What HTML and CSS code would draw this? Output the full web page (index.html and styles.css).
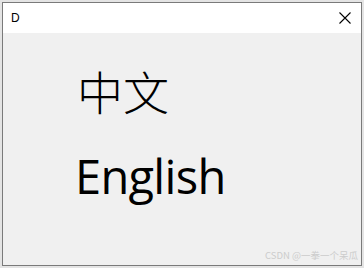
FILE: index.html
```html
<!DOCTYPE html>
<html>
<head>
<meta charset="utf-8">
<link rel="stylesheet" href="styles.css">
</head>
<body>
<div class="window">
  <div class="titlebar">
    <span class="title">D</span>
    <svg class="close" width="12" height="12" viewBox="0 0 12 12"><path d="M0.5 0.5 L11.5 11.5 M11.5 0.5 L0.5 11.5" stroke="#000" stroke-width="1.1" fill="none"/></svg>
  </div>
  <div class="content">
    <div class="zh">中文</div>
    <div class="en">English</div>
    <div class="mark">CSDN @一拳一个呆瓜</div>
  </div>
</div>
</body>
</html>
```
FILE: styles.css
```css
html, body { margin: 0; padding: 0; }
body {
  width: 364px;
  height: 268px;
  background: #e4e4e4;
  padding: 2px;
  box-sizing: border-box;
  font-family: "Open Sans", "Noto Sans CJK SC", sans-serif;
}
.window {
  height: 264px;
  box-sizing: border-box;
  border: 1px solid #7a7a7a;
  display: flex;
  flex-direction: column;
  background: #f0f0f0;
}
.titlebar {
  height: 30px;
  background: #fff;
  display: flex;
  align-items: center;
  justify-content: space-between;
  padding: 0 10px 0 8px;
  flex: none;
}
.title {
  font-family: "Liberation Sans", sans-serif;
  font-size: 12px;
  color: #000;
}
.close { display: block; }
.content {
  flex: 1;
  position: relative;
  padding: 0 0 0 72px;
}
.zh {
  font-family: "Noto Sans CJK SC", sans-serif;
  font-size: 46px;
  font-weight: 300;
  line-height: 1;
  margin-top: 34px;
  margin-left: 2px;
  color: #000;
}
.en {
  font-size: 47px;
  line-height: 1;
  margin-top: 40px;
  color: #000;
  letter-spacing: -0.7px;
}
.mark {
  position: absolute;
  right: 3px;
  bottom: 3px;
  font-family: "Noto Sans CJK SC", sans-serif;
  font-size: 9.5px;
  color: #cccccc;
}
```
